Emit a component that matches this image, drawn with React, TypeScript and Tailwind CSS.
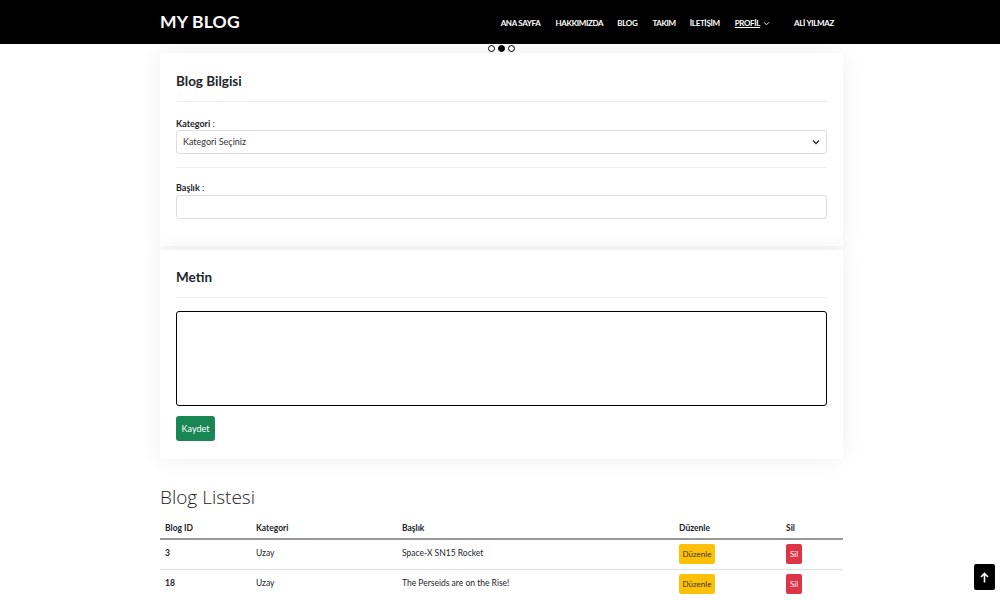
import React from "react";

const rows = [
  { id: "3", cat: "Uzay", title: "Space-X SN15 Rocket" },
  { id: "18", cat: "Uzay", title: "The Perseids are on the Rise!" },
];

export default function App() {
  return (
    <div className="w-[1000px] overflow-hidden bg-white text-[#212529]" style={{ fontFamily: "Lato, 'Open Sans', sans-serif", height: 600 }}>
      <nav className="h-[44px] bg-black">
        <div className="ml-[160px] flex h-full w-[683px] items-center justify-between">
          <div className="mt-[1px] text-[17.5px] font-bold tracking-[0.2px] text-white" style={{ fontFamily: "Lato, sans-serif" }}>MY BLOG</div>
          <ul className="mt-[2px] flex items-center text-[8px] font-bold tracking-[-0.35px] text-white" style={{ fontFamily: "Lato, sans-serif" }}>
            <li className="mr-[15px]">ANA SAYFA</li>
            <li className="mr-[14px]">HAKKIMIZDA</li>
            <li className="mr-[15px]">BLOG</li>
            <li className="mr-[14px]">TAKIM</li>
            <li className="mr-[15px]">İLETİŞİM</li>
            <li className="mr-[24px] flex items-center gap-[3px]">
              <span className="underline">PROFİL</span>
              <svg width="7" height="5" viewBox="0 0 8 5" fill="none" stroke="white" strokeWidth="1"><path d="M1 1l3 3 3-3" /></svg>
            </li>
            <li className="mr-[9px]">ALİ YILMAZ</li>
          </ul>
        </div>
      </nav>
      <div className="flex h-[9px] items-center justify-center gap-[3px] pl-[3px]">
        <span className="h-[7px] w-[7px] rounded-full border border-black bg-white" />
        <span className="h-[7px] w-[7px] rounded-full border border-black bg-black" />
        <span className="h-[7px] w-[7px] rounded-full border border-black bg-white" />
      </div>
      <div className="ml-[160px] w-[683px]">
        <div className="bg-white px-[16px] pt-[18px] pb-[27px] shadow-[0_0_22px_rgba(0,0,0,0.07)]">
          <h4 className="text-[13.5px] font-bold leading-[20px]" style={{ fontFamily: "Lato, sans-serif" }}>Blog Bilgisi</h4>
          <div className="mt-[10px] border-t border-[#eeeeee]" />
          <div className="mt-[16px] text-[9px] leading-[12px]"><b>Kategori</b> :</div>
          <div className="flex h-[24px] items-center justify-between rounded-[3px] border border-[#dedede] bg-white px-[6px] text-[9px] text-[#333]">
            <span>Kategori Seçiniz</span>
            <svg width="8" height="6" viewBox="0 0 8 6" fill="none" stroke="#333" strokeWidth="1.4"><path d="M1 1.5l3 3 3-3" /></svg>
          </div>
          <div className="mt-[13px] border-t border-[#f0f0f0]" />
          <div className="mt-[14px] text-[9px] leading-[12px]"><b>Başlık</b> :</div>
          <div className="mt-[1px] h-[24px] rounded-[3px] border border-[#dedede] bg-white" />
        </div>
        <div className="mt-[4px] bg-white px-[16px] pt-[17px] pb-[18px] shadow-[0_0_22px_rgba(0,0,0,0.07)]">
          <h4 className="text-[13.5px] font-bold leading-[20px]" style={{ fontFamily: "Lato, sans-serif" }}>Metin</h4>
          <div className="mt-[10px] border-t border-[#eeeeee]" />
          <div className="mt-[13px] h-[95px] rounded-[3px] border-[1.5px] border-black bg-white" />
          <button className="mt-[10px] h-[25px] w-[39px] rounded-[3px] bg-[#198754] text-[9px] text-white">Kaydet</button>
        </div>
        <h2 className="mt-[26px] text-[19px] font-light leading-[24px] text-[#222]" style={{ fontFamily: "'Open Sans', sans-serif" }}>Blog Listesi</h2>
        <table className="mt-[9px] w-full border-collapse text-[8.5px]">
          <thead>
            <tr className="h-[21px] border-b-2 border-[#999] text-left font-bold">
              <th className="w-[91px] pl-[5px] font-bold">Blog ID</th>
              <th className="w-[146px] pl-[5px] font-bold">Kategori</th>
              <th className="w-[277px] pl-[5px] font-bold">Başlık</th>
              <th className="w-[107px] pl-[5px] font-bold">Düzenle</th>
              <th className="pl-[5px] font-bold">Sil</th>
            </tr>
          </thead>
          <tbody>
            {rows.map((r, i) => (
              <tr key={r.id} className={i === 0 ? "h-[30px] border-b border-[#dee2e6]" : "h-[31px]"}>
                <td className="pl-[5px] align-top pt-[7px] font-bold">{r.id}</td>
                <td className="pl-[5px] align-top pt-[7px]">{r.cat}</td>
                <td className="pl-[5px] align-top pt-[7px]">{r.title}</td>
                <td className="pl-[5px] align-top pt-[4px]">
                  <span className="inline-flex h-[20px] w-[36px] items-center justify-center rounded-[2px] bg-[#ffc107] text-[8px] text-[#333]">Düzenle</span>
                </td>
                <td className="pl-[5px] align-top pt-[4px]">
                  <span className="inline-flex h-[20px] w-[16px] items-center justify-center rounded-[2px] bg-[#dc3545] text-[8px] text-white">Sil</span>
                </td>
              </tr>
            ))}
          </tbody>
        </table>
      </div>
      <div className="fixed left-[974px] top-[564px] flex h-[26px] w-[21px] items-center justify-center rounded-[2px] bg-black">
        <svg width="9" height="11" viewBox="0 0 9 11" fill="none" stroke="white" strokeWidth="1.6"><path d="M4.5 10.5V1.5M1 5l3.5-3.5L8 5" /></svg>
      </div>
    </div>
  );
}
